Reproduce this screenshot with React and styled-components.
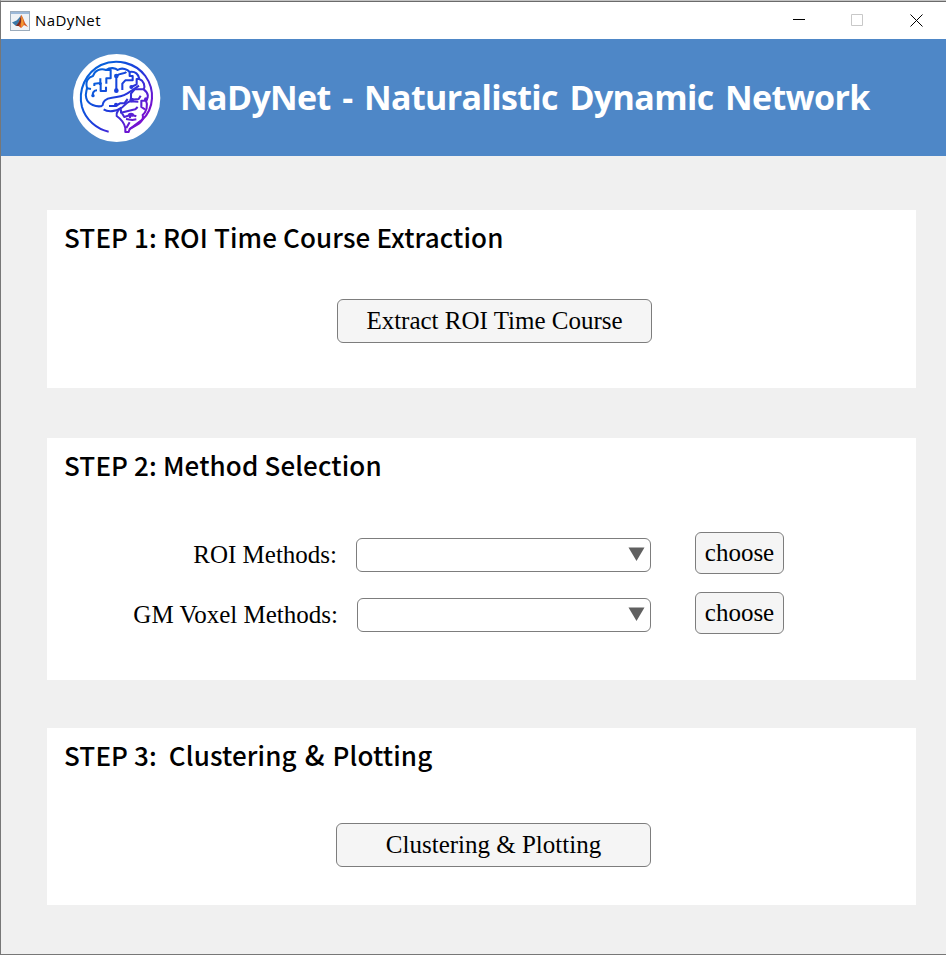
import React from 'react';
import styled, { createGlobalStyle } from 'styled-components';

const GlobalStyle = createGlobalStyle`
  *, *::before, *::after { box-sizing: border-box; }
  html, body { margin: 0; padding: 0; overflow: hidden; }
`;

const Window = styled.main`
  width: 946px;
  height: 955px;
  display: flex;
  flex-direction: column;
  background: #f0f0f0;
  border-left: 1px solid #777;
  border-top: 1px solid #c4c4c4;
  border-bottom: 1px solid #777;
  color: #000;
`;

const TitleBar = styled.div`
  flex: none;
  height: 38px;
  display: flex;
  align-items: center;
  padding: 0 23px 0 9px;
  border-top: 1px solid #6b6b6b;
  background: #fff;
`;

const AppName = styled.span`
  flex: 1;
  margin-left: 5px;
  padding-bottom: 2px;
  font: 15px/20px 'Open Sans', sans-serif;
  letter-spacing: 0.4px;
`;

const WindowControls = styled.div`
  display: flex;
  gap: 46px;
  padding-bottom: 1px;
`;

const Banner = styled.header`
  flex: none;
  height: 117px;
  display: flex;
  align-items: center;
  gap: 19px;
  padding-left: 72px;
  background: #4e87c7;
`;

const BannerTitle = styled.h1`
  margin: 0;
  padding-bottom: 2px;
  color: #fff;
  font: 700 34px/48px 'Open Sans', sans-serif;
  letter-spacing: -0.65px;
  word-spacing: 3.4px;
  white-space: nowrap;
`;

const Steps = styled.div`
  display: flex;
  flex-direction: column;
  padding: 54px 30px 0 46px;
`;

const Panel = styled.section`
  height: ${(p) => p.$height}px;
  margin-bottom: ${(p) => p.$gap}px;
  background: #fff;
`;

const StepTitle = styled.h2`
  margin: 0;
  padding: 7px 0 2px 17px;
  font: 500 26px/40px 'Noto Sans CJK SC', sans-serif;
  letter-spacing: 0.13px;
  white-space: pre;
`;

const Ampersand = styled.span`
  display: inline-block;
  margin: 0 2px;
  font-size: 28px;
  line-height: 26px;
`;

const Button = styled.button`
  display: flex;
  align-items: center;
  justify-content: center;
  width: ${(p) => p.$width}px;
  height: ${(p) => p.$height}px;
  padding: 0 0 1px;
  border: 1px solid #7d7d7d;
  border-radius: 6px;
  background: #f5f5f5;
  color: #000;
  font: 25px/30px 'Liberation Serif', serif;
  white-space: nowrap;
`;

const ActionRow = styled.div`
  display: flex;
  padding: ${(p) => p.$top}px 0 0 ${(p) => p.$left}px;
`;

const MethodRows = styled.div`
  display: flex;
  flex-direction: column;
  gap: 18px;
  padding-top: 45px;
`;

const MethodRow = styled.div`
  display: flex;
  align-items: center;
  height: 42px;
`;

const MethodLabel = styled.label`
  width: ${(p) => p.$width}px;
  padding-top: 4px;
  text-align: right;
  font: 25px/30px 'Liberation Serif', serif;
  white-space: nowrap;
`;

const Dropdown = styled.div`
  display: flex;
  align-items: center;
  justify-content: flex-end;
  width: ${(p) => p.$width}px;
  height: 34px;
  margin: 4px 44px 0 19px;
  padding: 0 5px 2px 0;
  border: 1px solid #7d7d7d;
  border-radius: 6px;
  background: #fff;
`;

const MatlabIcon = () => (
  <svg width="20" height="20" viewBox="0 0 20 20">
    <rect x="0.5" y="0.5" width="19" height="19" fill="#eef2f6" stroke="#9babbb" />
    <rect x="1" y="1" width="18" height="2" fill="#9cb9d9" />
    <path d="M2 11.5 6.5 9.5 9 7l2-3-2 8-3 3z" fill="#3978a8" />
    <path d="m6 15 3-4 2.4-7.2L13 7l2 5 3 4-4-2-3 3-2.5-2z" fill="#d9571f" />
    <path d="m6 15 3-4 2-6 .5 5-2.5 5z" fill="#742b26" />
    <path d="m11.4 4.5 1.6 4 .8 5-2.8 3z" fill="#f39a35" />
  </svg>
);

const BrainLogo = () => (
  <svg width="88" height="88" viewBox="20 18 264 264">
    <defs>
      <linearGradient id="brainStroke" gradientUnits="userSpaceOnUse" x1="90" y1="90" x2="235" y2="205">
        <stop offset="0" stopColor="#075fdb" />
        <stop offset="0.5" stopColor="#2038dc" />
        <stop offset="1" stopColor="#7810d0" />
      </linearGradient>
    </defs>
    <ellipse cx="151" cy="150" rx="131" ry="132" fill="#fff" />
    <g fill="none" stroke="url(#brainStroke)" strokeWidth="6.2" strokeLinejoin="round">
      <path d="M127 251C92 244 58 216 47 177C34 126 58 74 104 51C151 30 207 44 237 84C266 124 264 181 228 215L190 243" />
      <path d="M108 174C90 178 65 170 60 151C55 137 62 128 62 119C56 98 67 87 80 84C85 67 103 60 119 66C132 57 148 60 154 66C168 57 184 65 190 72C207 69 217 79 219 93C233 99 237 113 232 124C248 136 247 149 239 158C246 173 240 191 229 201C235 220 213 230 190 243L187 252H177V240C174 225 161 211 151 204C148 194 158 183 165 179" />
      <path d="M108 174C109 157 121 151 137 149C160 147 170 144 182 137C194 130 204 123 218 113M112 184C126 194 150 189 162 182C173 176 178 164 191 160L216 161" />
      <path d="M119 66H133V91H120V107M102 91V105L84 107V114M92 127C83 127 78 134 79 144M62 121 74 123M103 111V129H119V116M150 84V125M151 83C162 75 174 78 180 72M190 73V84H199V97H177L168 107V126M219 93H211V109L195 117M231 124H205L194 137V155M128 174H148L161 166H174L184 153M193 155 217 153 223 143M239 158H225V177L236 184M164 184V194L188 188 207 184 214 177M166 194 174 207 194 200 210 205M179 213 198 216 210 214M180 240 190 223M191 201V210" />
    </g>
    <g fill="url(#brainStroke)">
      <circle cx="150" cy="84" r="7" />
      <circle cx="150" cy="128" r="7" />
      <circle cx="102" cy="107" r="5" />
      <circle cx="80" cy="143" r="5" />
      <circle cx="195" cy="117" r="6" />
      <circle cx="196" cy="156" r="7" />
      <circle cx="149" cy="170" r="6" />
      <circle cx="239" cy="154" r="6" />
      <ellipse cx="194" cy="200" rx="9" ry="6" />
    </g>
  </svg>
);

const Control = ({ d, color = '#000' }) => (
  <svg width="13" height="14" viewBox="0 0 13 14" fill="none" stroke={color}>
    <path d={d} />
  </svg>
);

const Arrow = () => (
  <svg width="17" height="14" viewBox="0 0 17 14">
    <path d="M0.5 0.5h16L8.5 14z" fill="#606060" />
  </svg>
);

export default function App() {
  return (
    <>
      <GlobalStyle />
      <Window>
        <TitleBar>
          <MatlabIcon />
          <AppName>NaDyNet</AppName>
          <WindowControls>
            <Control d="M1 6.5h12" />
            <Control d="M.5 1.5h11v11H.5z" color="#c8c8c8" />
            <Control d="m.5 1.5 12 12m0-12-12 12" />
          </WindowControls>
        </TitleBar>
        <Banner>
          <BrainLogo />
          <BannerTitle>NaDyNet - Naturalistic Dynamic Network</BannerTitle>
        </Banner>
        <Steps>
          <Panel $height={178} $gap={50}>
            <StepTitle>STEP 1: ROI Time Course Extraction</StepTitle>
            <ActionRow $top={40} $left={290}>
              <Button $width={315} $height={44}>Extract ROI Time Course</Button>
            </ActionRow>
          </Panel>
          <Panel $height={242} $gap={48}>
            <StepTitle>STEP 2: Method Selection</StepTitle>
            <MethodRows>
              <MethodRow>
                <MethodLabel $width={290}>ROI Methods:</MethodLabel>
                <Dropdown $width={295}><Arrow /></Dropdown>
                <Button $width={89} $height={42}>choose</Button>
              </MethodRow>
              <MethodRow>
                <MethodLabel $width={291}>GM Voxel Methods:</MethodLabel>
                <Dropdown $width={294}><Arrow /></Dropdown>
                <Button $width={89} $height={42}>choose</Button>
              </MethodRow>
            </MethodRows>
          </Panel>
          <Panel $height={177} $gap={0}>
            <StepTitle>STEP 3:  Clustering <Ampersand>&amp;</Ampersand> Plotting</StepTitle>
            <ActionRow $top={46} $left={289}>
              <Button $width={315} $height={44}>Clustering &amp; Plotting</Button>
            </ActionRow>
          </Panel>
        </Steps>
      </Window>
    </>
  );
}
